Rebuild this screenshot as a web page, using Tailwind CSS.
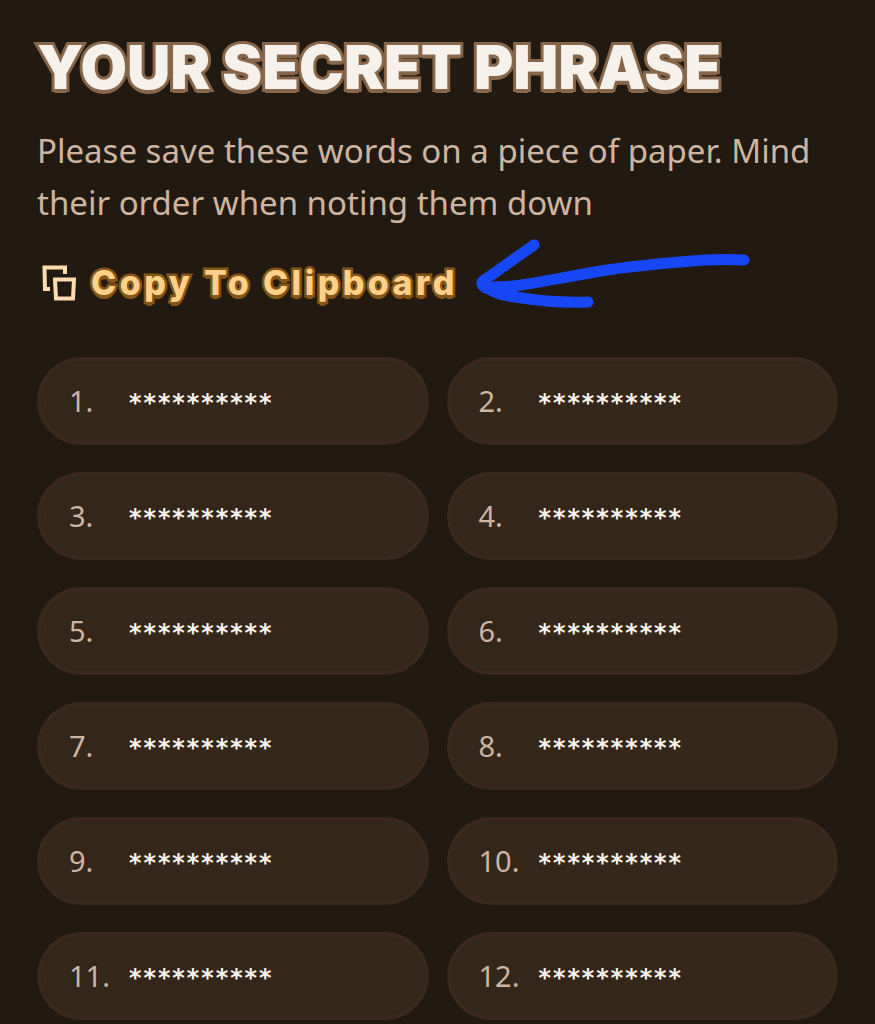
<!DOCTYPE html>
<html lang="en">
<head>
  <meta charset="UTF-8">
  <meta name="viewport" content="width=device-width, initial-scale=1.0">
  <title>Your Secret Phrase</title>
  <script src="https://cdn.jsdelivr.net/npm/@tailwindcss/browser@4"></script>
</head>
<body class="bg-[#221910] min-h-screen overflow-x-hidden font-['Noto_Sans',sans-serif] text-[#cdb5a1]">
  <main class="px-[37px] pt-8 pb-1">
    <h1 class="font-['Inter',sans-serif] font-black text-[60px] leading-[70px] whitespace-nowrap uppercase text-[#f6f1ea] [-webkit-text-stroke:6px_#87664a] [paint-order:stroke_fill] [text-shadow:0_2px_0_#87664a,0_4px_0_#87664a]">Your Secret Phrase</h1>

    <p class="mt-[23px] text-[33px] leading-[52px]">Please save these words on a piece of paper. Mind their order when noting them down</p>

    <div class="relative mt-7 h-[52px] flex items-center">
      <button id="copyBtn" type="button" class="flex items-center gap-[14px] pl-1 cursor-pointer">
        <svg class="w-9 h-9" viewBox="0 0 36 36" fill="none" stroke="#ffdcae" stroke-width="4" aria-hidden="true">
          <path d="M9 24H4L3.500 2.500H24V9"/>
          <path d="M14 14.500H33L32 33.500H15Z"/>
        </svg>
        <span class="font-['Inter',sans-serif] font-extrabold text-[34px] leading-[48px] tracking-widest whitespace-nowrap text-[#ffd08a] [-webkit-text-stroke:5px_#835517] [paint-order:stroke_fill] [text-shadow:0_2px_0_#835517,0_4px_0_#835517]">Copy To Clipboard</span>
      </button>
      <!-- hand-drawn pointer to the copy button -->
      <svg class="absolute left-[433px] top-[-25px] w-[290px] h-[80px]" viewBox="0 0 290 80" fill="none" stroke="#1747f5" stroke-width="11" stroke-linecap="round" stroke-linejoin="round" aria-hidden="true">
        <path d="M64 13L13 49C11 51 12 54 16 56C52 55 78 48 131 39C168 33 209 30 235 28Q255 27 274 28"/>
        <path d="M13 50C17 59 29 63 45 65C70 69 94 71 118 70"/>
        <path d="M18 52L34 51L46 60L26 58Z" fill="#1747f5" stroke-width="4"/>
      </svg>
    </div>

    <ol id="wordList" class="mt-12 grid grid-cols-2 gap-x-[18px] gap-y-[27px]"></ol>
  </main>

  <script>
    const wordList = document.getElementById('wordList');
    const words = Array(12).fill('**********');

    words.forEach((word, i) => {
      const item = document.createElement('li');
      item.className = 'flex items-center h-[88px] rounded-full border-4 border-[#3a281d] bg-[#35261a] pl-7';
      item.innerHTML = `
        <span class="w-[59px] shrink-0 text-[29px]">${i + 1}.</span>
        <span class="pt-1 font-['DejaVu_Sans_Mono',monospace] font-bold text-[24px] text-[#f6f1ea]">${word}</span>
      `;
      wordList.appendChild(item);
    });

    document.getElementById('copyBtn').addEventListener('click', () => {
      navigator.clipboard.writeText(words.join(' '));
    });
  </script>
</body>
</html>
